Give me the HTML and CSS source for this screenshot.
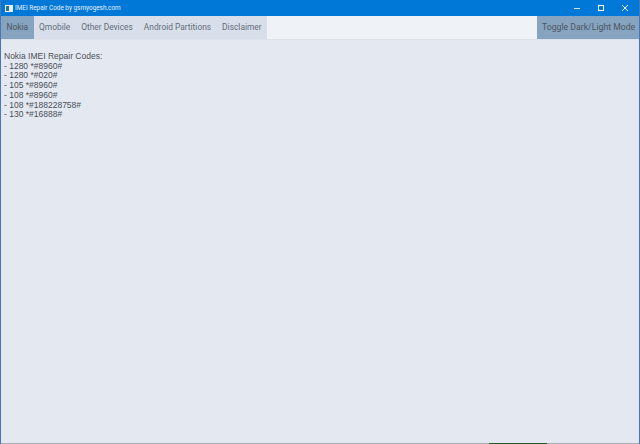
FILE: index.html
```html
<!DOCTYPE html>
<html lang="en">
<head>
<meta charset="utf-8">
<title>IMEI Repair Code by gsmyogesh.com</title>
<link rel="stylesheet" href="styles.css">
</head>
<body>
<div class="window">
  <header class="titlebar">
    <svg class="app-icon" width="8" height="7" viewBox="0 0 8 7"><rect width="8" height="7" fill="#e8f0f6"/><rect x="1" y="1" width="3" height="5" fill="#2f6f8f"/></svg>
    <span class="title">IMEI Repair Code by gsmyogesh.com</span>
    <div class="controls">
      <svg class="ctl" width="24" height="16" viewBox="0 0 24 16"><path d="M9 8.5h6" stroke="#cfe4f7" stroke-width="1"/></svg>
      <svg class="ctl" width="24" height="16" viewBox="0 0 24 16"><rect x="9.5" y="5.5" width="5" height="5" fill="none" stroke="#fff" stroke-width="1"/></svg>
      <svg class="ctl" width="24" height="16" viewBox="0 0 24 16"><path d="M9 5l6 6M15 5l-6 6" stroke="#fff" stroke-width="1"/></svg>
    </div>
  </header>
  <nav class="tabbar">
    <div class="tabs">
      <a class="tab active">Nokia</a>
      <a class="tab">Qmobile</a>
      <a class="tab">Other Devices</a>
      <a class="tab">Android Partitions</a>
      <a class="tab">Disclaimer</a>
    </div>
    <a class="toggle">Toggle Dark/Light Mode</a>
  </nav>
  <main class="content">
    <p class="codes">Nokia IMEI Repair Codes:<br>- 1280 *#8960#<br>- 1280 *#020#<br>- 105 *#8960#<br>- 108 *#8960#<br>- 108 *#188228758#<br>- 130 *#16888#</p>
  </main>
  <footer class="bottom"><span class="task"></span></footer>
</div>
</body>
</html>
```
FILE: styles.css
```css
* { box-sizing: border-box; }
html, body { margin: 0; height: 100%; }
body { font-family: "Liberation Sans", Arial, sans-serif; background: #e4e9f1; }
.window {
  width: 640px; height: 444px; display: flex; flex-direction: column;
  border-left: 1px solid #4a76b8; border-right: 1px solid #4a76b8;
  background: #e4e9f1; overflow: hidden;
}
.titlebar {
  height: 16px; flex: none; background: #0078d7; color: #fff;
  display: flex; align-items: center; padding: 0 3px 0 5px;
  font-family: Roboto, sans-serif; margin: 0 -1px;
}
.app-icon { flex: none; margin-right: 2px; }
.title { white-space: nowrap; color: #e6f1fb; font-size: 6.4px; }
.controls { margin-left: auto; display: flex; }
.ctl { display: block; }
.tabbar {
  height: 23px; flex: none; background: #eff2f7; display: flex;
  justify-content: space-between; font-size: 8.4px; color: #636c79;
  font-family: Roboto, sans-serif;
}
.tabs { display: flex; background: #d8dfea; }
.tab { padding: 0 5.5px; line-height: 23px; white-space: nowrap; }
.tab.active { background: #86a3bf; color: #4c5662; }
.toggle { background: #86a3bf; color: #4c5662; font-size: 8.7px; padding: 0 0 0 5px; line-height: 23px; white-space: nowrap; width: 102px; }
.content { flex: 1; padding: 12px 3px 0; border-top: 1px solid #dde2ea; }
.codes { margin: 0; font-size: 8.5px; line-height: 9.7px; color: #4a4f57; }
.bottom { height: 1px; flex: none; background: #a9adb3; position: relative; margin: 0 -1px; }
.task { position: absolute; left: 489px; bottom: 0; width: 58px; height: 1px; background: #1e5a22; }
```
